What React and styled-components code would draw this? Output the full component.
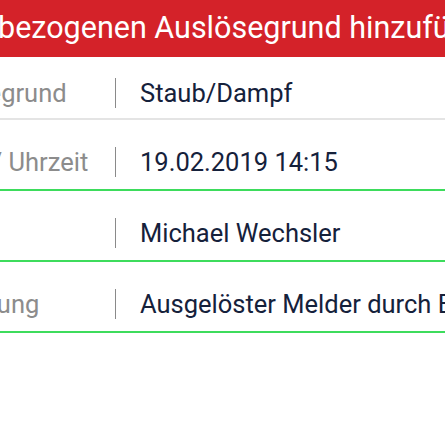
import React from 'react'
import styled, { createGlobalStyle } from 'styled-components';

const GlobalStyle = createGlobalStyle`
  html, body {
    margin: 0;
    padding: 0;
    background: #ffffff;
  }
  body {
    font-family: Roboto, "Noto Sans", sans-serif;
  }
`;

const StyledPage = styled.div`
  width: 445px;
  height: 445px;
  overflow: hidden;
  background: #ffffff;
`;

const StyledScreen = styled.div`
  width: 640px;
  margin-left: -90px;
`;

const StyledHeader = styled.div`
  height: 57px;
  background: #d42229;
  color: #ffffff;
  font-size: 30.5px;
  display: flex;
  align-items: center;
  padding-left: 1px;
  padding-bottom: 3px;
  box-sizing: border-box;
  white-space: nowrap;
`;

const StyledRow = styled.div`
  display: grid;
  grid-template-columns: 205px 1px 1fr;
  align-items: center;
  height: ${props => props.height}px;
  padding-top: ${props => props.offset}px;
  box-sizing: border-box;
  border-bottom: 2px solid ${props => props.line};
`;

const StyledLabel = styled.span`
  font-size: 25.5px;
  color: #8c8c8c;
  white-space: nowrap;
`;

const StyledDivider = styled.span`
  width: 1px;
  height: 30px;
  background: #8a8a8a;
`;

const StyledValue = styled.span`
  font-size: 25.5px;
  color: #15213b;
  padding-left: 24px;
  white-space: nowrap;
`;

StyledPage.displayName = 'StyledPage';
StyledScreen.displayName = 'StyledScreen';
StyledHeader.displayName = 'StyledHeader';
StyledRow.displayName = 'StyledRow';
StyledLabel.displayName = 'StyledLabel';
StyledDivider.displayName = 'StyledDivider';
StyledValue.displayName = 'StyledValue';

const rows = [
  { label: 'Auslösegrund', value: 'Staub/Dampf', height: 63, offset: 11, line: '#e4e4e4' },
  { label: 'Datum / Uhrzeit', value: '19.02.2019 14:15', height: 71, offset: 15, line: '#3ddc5c' },
  { label: 'Melder', value: 'Michael Wechsler', height: 71, offset: 15, line: '#3ddc5c' },
  { label: 'Bemerkung', value: 'Ausgelöster Melder durch Bauarbeiten', height: 71, offset: 15, line: '#3ddc5c' },
];

function App() {
  return (
    <StyledPage>
      <GlobalStyle />
      <StyledScreen>
        <StyledHeader>Objektbezogenen Auslösegrund hinzufügen</StyledHeader>
        {rows.map(row => (
          <StyledRow key={row.label} height={row.height} offset={row.offset} line={row.line}>
            <StyledLabel>{row.label}</StyledLabel>
            <StyledDivider />
            <StyledValue>{row.value}</StyledValue>
          </StyledRow>
        ))}
      </StyledScreen>
    </StyledPage>
  )
}

export default App;
